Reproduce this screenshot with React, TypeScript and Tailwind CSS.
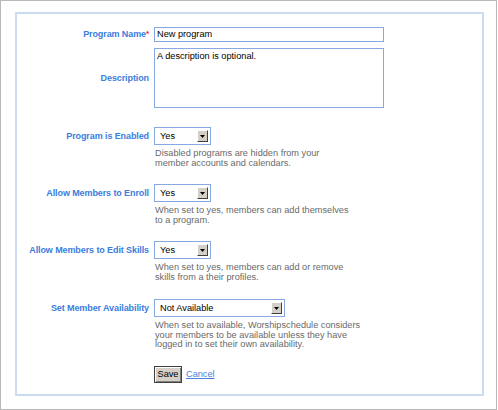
import React from "react";

const font = { fontFamily: '"Liberation Sans", Arial, sans-serif' };

function Label({ children, required }: { children: React.ReactNode; required?: boolean }) {
  return (
    <div className="w-[133px] shrink-0 text-right text-[9px] font-bold leading-[11px] tracking-[-0.1px] text-[#3b7ddd] pr-[1px]">
      {children}
      {required && <span className="text-[#e02020] text-[8px] align-top relative top-[-1px]">*</span>}
    </div>
  );
}

function FakeSelect({ value, width }: { value: string; width: string }) {
  return (
    <div
      className={`${width} h-[18px] shrink-0 border border-[#86a9e2] bg-white flex items-center justify-between pl-[5px] pr-[2px]`}
    >
      <span className="text-[9.2px] leading-[11px] text-black">{value}</span>
      <span className="w-[11px] h-[12px] bg-[#d4d0c8] border-t border-l border-t-white border-l-white border-b border-r border-b-[#404040] border-r-[#404040] flex items-center justify-center">
        <svg width="5" height="3" viewBox="0 0 5 3">
          <polygon points="0,0 5,0 2.5,3" fill="#000" />
        </svg>
      </span>
    </div>
  );
}

function Help({ children }: { children: React.ReactNode }) {
  return (
    <div className="ml-[137px] pl-[1px] text-[9.2px] leading-[9.5px] text-[#6a6a6a]">{children}</div>
  );
}

export default function App() {
  return (
    <div className="w-[498px] h-[410px] bg-white" style={font}>
      <div className="w-[497px] h-[410px] border border-[#b8b8b8] pt-[11px] pl-[14px]">
        <div className="w-[469px] h-[384px] border-2 border-[#cbdcf1] pt-[13px] flex flex-col">
          <div className="flex items-center gap-[4px]">
            <Label required>Program Name</Label>
            <div className="w-[230px] h-[15px] border border-[#86a9e2] bg-white pl-[2px] flex items-center text-[9.2px] leading-[11px] text-black">
              New program
            </div>
          </div>
          <div className="flex items-center gap-[4px] mt-[6px]">
            <Label>Description</Label>
            <div className="w-[230px] h-[60px] border border-[#86a9e2] bg-white pl-[2px] pt-[2px] text-[9.2px] leading-[11px] text-black">
              A description is optional.
            </div>
          </div>

          <div className="flex items-center gap-[4px] mt-[19px]">
            <Label>Program is Enabled</Label>
            <FakeSelect value="Yes" width="w-[57px]" />
          </div>
          <div className="mt-[4px]">
            <Help>
              Disabled programs are hidden from your
              <br />
              member accounts and calendars.
            </Help>
          </div>

          <div className="flex items-center gap-[4px] mt-[16px]">
            <Label>Allow Members to Enroll</Label>
            <FakeSelect value="Yes" width="w-[57px]" />
          </div>
          <div className="mt-[4px]">
            <Help>
              When set to yes, members can add themselves
              <br />
              to a program.
            </Help>
          </div>

          <div className="flex items-center gap-[4px] mt-[16px]">
            <Label>Allow Members to Edit Skills</Label>
            <FakeSelect value="Yes" width="w-[57px]" />
          </div>
          <div className="mt-[4px]">
            <Help>
              When set to yes, members can add or remove
              <br />
              skills from a their profiles.
            </Help>
          </div>

          <div className="flex items-center gap-[4px] mt-[17px]">
            <Label>Set Member Availability</Label>
            <FakeSelect value="Not Available" width="w-[131px]" />
          </div>
          <div className="mt-[4px]">
            <Help>
              When set to available, Worshipschedule considers
              <br />
              your members to be available unless they have
              <br />
              logged in to set their own availability.
            </Help>
          </div>

          <div className="flex items-center gap-[4px] mt-[16px] ml-[137px]">
            <button className="w-[28px] h-[17px] bg-[#d4d0c8] border border-[#404040] shadow-[inset_1px_1px_0_#ffffff,inset_-1px_-1px_0_#808080] text-[9.2px] leading-[11px] text-black flex items-center justify-center p-0">
              Save
            </button>
            <a href="#" className="text-[9.2px] leading-[11px] text-[#4a80d8] underline">
              Cancel
            </a>
          </div>
        </div>
      </div>
    </div>
  );
}
